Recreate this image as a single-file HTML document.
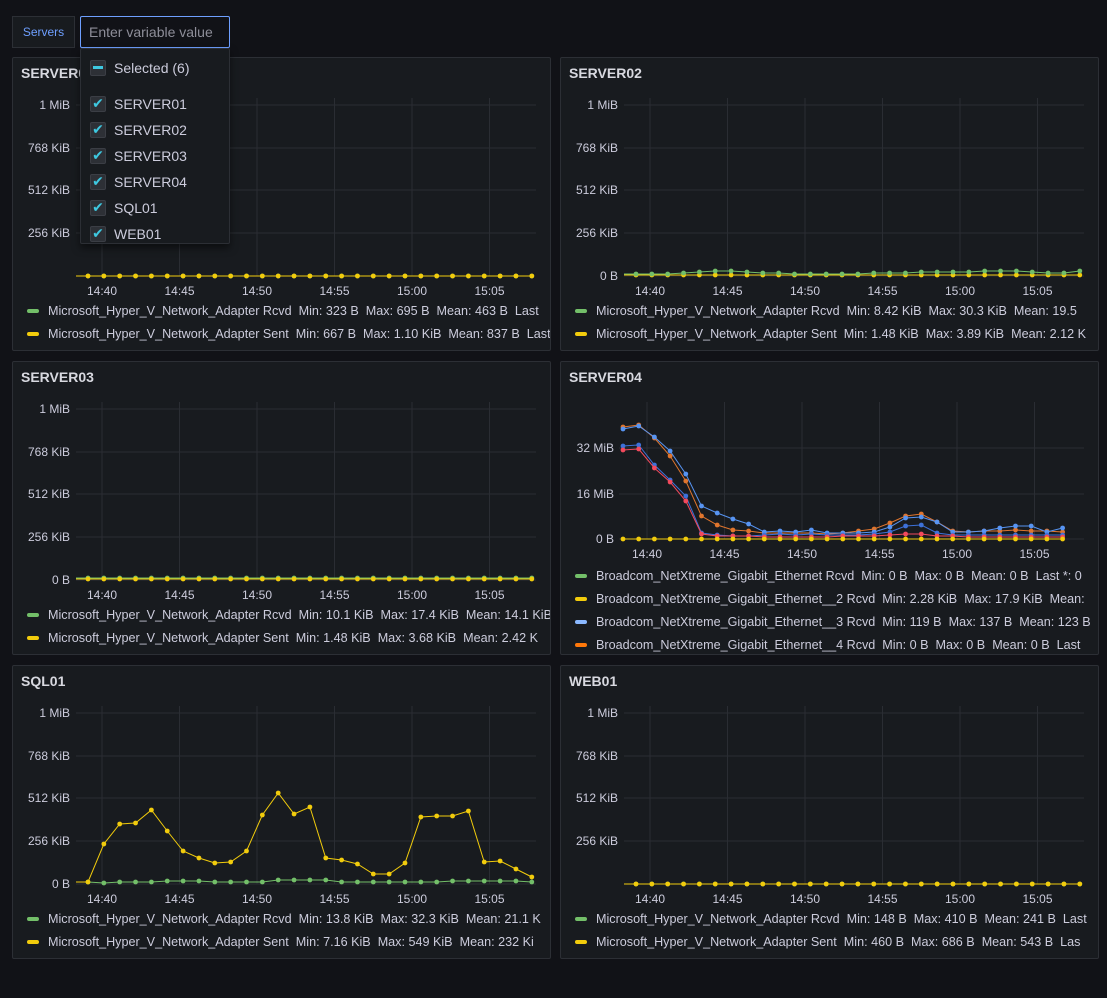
<!DOCTYPE html>
<html><head><meta charset="utf-8"><style>
body{margin:0;background:#111217;width:1107px;height:998px;overflow:hidden;font-family:"Liberation Sans",sans-serif;color:#ccccdc;position:relative}
.p{position:absolute;width:539px;height:294px;background:#181b1f;border:1px solid #2c2f35;box-sizing:border-box;border-radius:2px;overflow:hidden}
.t{position:absolute;left:8px;top:7px;font-size:14px;font-weight:bold;color:#d8d9e0}
svg{position:absolute;left:0;top:0}
.btn{position:absolute;left:12px;top:16px;width:63px;height:32px;box-sizing:border-box;border:1px solid #2c2f35;background:#181b1f;color:#6e9fff;font-size:12px;line-height:30px;text-align:center}
.inp{position:absolute;left:80px;top:16px;width:150px;height:32px;box-sizing:border-box;border:1px solid #6e9fff;border-radius:2px;background:#111217;color:#8e8e99;font-size:14px;line-height:30px;padding-left:8px}
.dd{position:absolute;left:80px;top:48px;width:150px;height:196px;box-sizing:border-box;border:1px solid #2c2f35;background:#181b1f;border-radius:2px;box-shadow:0 4px 8px rgba(0,0,0,.5)}
.it{position:absolute;left:9px;font-size:14px;color:#ccccdc;height:18px;line-height:18px}
.cb{display:inline-block;width:14px;height:14px;background:#2d3036;border:1px solid #3b3e45;border-radius:2px;vertical-align:top;margin-top:1px;margin-right:8px;position:relative;color:#3ec8e0;font-size:14px;line-height:14px;text-align:center;font-family:"DejaVu Sans",sans-serif}
</style></head><body>
<div class="btn">Servers</div>
<div id="root"></div>
<div class="inp">Enter variable value</div>
<div class="dd">
<div class="it" style="top:10px"><span class="cb"><span style="position:absolute;left:2px;top:5px;width:10px;height:3px;background:#3ec8e0"></span></span>Selected (6)</div>
<div class="it" style="top:46px"><span class="cb">✔</span>SERVER01</div>
<div class="it" style="top:72px"><span class="cb">✔</span>SERVER02</div>
<div class="it" style="top:98px"><span class="cb">✔</span>SERVER03</div>
<div class="it" style="top:124px"><span class="cb">✔</span>SERVER04</div>
<div class="it" style="top:150px"><span class="cb">✔</span>SQL01</div>
<div class="it" style="top:176px"><span class="cb">✔</span>WEB01</div>
</div>
<script>
const G='#73bf69',Y='#f2cc0c',B='#8ab8ff',O='#ff780a';
function flat(v,n){return Array(n||29).fill(v)}
const panels=[
{x:12,y:57,t:'SERVER01',s:[[G,flat(218)],[Y,flat(218)]],L:[[G,'Microsoft_Hyper_V_Network_Adapter Rcvd  Min: 323 B  Max: 695 B  Mean: 463 B  Last'],[Y,'Microsoft_Hyper_V_Network_Adapter Sent  Min: 667 B  Max: 1.10 KiB  Mean: 837 B  Last']]},
{x:560,y:57,t:'SERVER02',s:[[Y,flat(217)],[G,[216,216,216,215,214,213,213,214,215,215,216,216,216,216,216,215,215,215,214,214,214,214,213,213,213,214,215,215,213]]],L:[[G,'Microsoft_Hyper_V_Network_Adapter Rcvd  Min: 8.42 KiB  Max: 30.3 KiB  Mean: 19.5'],[Y,'Microsoft_Hyper_V_Network_Adapter Sent  Min: 1.48 KiB  Max: 3.89 KiB  Mean: 2.12 K']]},
{x:12,y:361,t:'SERVER03',s:[[G,flat(216)],[Y,flat(217)]],L:[[G,'Microsoft_Hyper_V_Network_Adapter Rcvd  Min: 10.1 KiB  Max: 17.4 KiB  Mean: 14.1 KiB'],[Y,'Microsoft_Hyper_V_Network_Adapter Sent  Min: 1.48 KiB  Max: 3.68 KiB  Mean: 2.42 K']]},
{x:560,y:361,t:'SERVER04',big:1},
{x:12,y:665,t:'SQL01',s:[[G,[216,217,216,216,216,215,215,215,216,216,216,216,214,214,214,214,216,216,216,216,216,216,216,215,215,215,215,215,216]],[Y,[216,178,158,157,144,165,185,192,197,196,185,149,127,148,141,192,194,198,208,208,197,151,150,150,145,196,195,203,211]]],L:[[G,'Microsoft_Hyper_V_Network_Adapter Rcvd  Min: 13.8 KiB  Max: 32.3 KiB  Mean: 21.1 K'],[Y,'Microsoft_Hyper_V_Network_Adapter Sent  Min: 7.16 KiB  Max: 549 KiB  Mean: 232 Ki']]},
{x:560,y:665,t:'WEB01',s:[[G,flat(218)],[Y,flat(218)]],noZero:1,noLine:1,L:[[G,'Microsoft_Hyper_V_Network_Adapter Rcvd  Min: 148 B  Max: 410 B  Mean: 241 B  Last'],[Y,'Microsoft_Hyper_V_Network_Adapter Sent  Min: 460 B  Max: 686 B  Mean: 543 B  Las']]}
];
panels[0].noZero=1;panels[0].noLine=1;
const xl=['14:40','14:45','14:50','14:55','15:00','15:05'];
let h='';
for(const p of panels){
 let s=`<svg width="539" height="294" font-family="Liberation Sans" font-size="12" fill="#ccccdc">`;
 if(!p.big){
  const ys=[[47,'1 MiB'],[90,'768 KiB'],[132,'512 KiB'],[175,'256 KiB'],[218,'0 B']];
  for(const [y,l] of ys){ if(!(p.noZero&&l=='0 B')) s+=`<text x="57" y="${y+4}" text-anchor="end">${l}</text>`; if(!(p.noLine&&l=='0 B')) s+=`<line x1="63" x2="523" y1="${y}" y2="${y}" stroke="#2a2d33"/>`;}
  xl.forEach((l,i)=>{const x=89+77.5*i;s+=`<line x1="${x}" x2="${x}" y1="40" y2="218" stroke="#2a2d33"/><text x="${x}" y="237" text-anchor="middle">${l}</text>`});
  for(const [c,d] of p.s){const pts=d.map((v,i)=>[75+i*15.85,v]);s+=`<polyline fill="none" stroke="${c}" stroke-width="1" points="63,${d[0]} ${pts.map(a=>a.join(',')).join(' ')}"/>`;pts.forEach(a=>{s+=`<circle cx="${a[0]}" cy="${a[1]}" r="2.4" fill="${c}"/>`});}
  p.L.forEach((l,i)=>{const y=253+i*23;s+=`<rect x="14" y="${y-2}" width="12" height="4" rx="2" fill="${l[0]}"/><text x="35" y="${y+4}" font-size="12.6" xml:space="preserve">${l[1]}</text>`});
 } else {
  const ys=[[86,'32 MiB'],[132,'16 MiB'],[177,'0 B']];
  for(const [y,l] of ys){s+=`<text x="53" y="${y+4}" text-anchor="end">${l}</text><line x1="58" x2="523" y1="${y}" y2="${y}" stroke="#2a2d33"/>`;}
  xl.forEach((l,i)=>{const x=86+77.5*i;s+=`<line x1="${x}" x2="${x}" y1="40" y2="177" stroke="#2a2d33"/><text x="${x}" y="196" text-anchor="middle">${l}</text>`});
  const ser=[
   ['#e0752d',[426,424,437,455,480,515,524,529,530,532,532,532,532,533,532,530,528,522,515,513,521,530,531,530,530,529,530,530,531]],
   ['#5794f2',[428,425,436,450,473,505,512,518,523,531,530,531,529,532,532,532,531,526,517,516,521,531,531,530,527,525,525,531,527]],
   ['#3d71d9',[445,444,464,479,495,532,534,535,535,534,533,534,533,534,534,534,533,531,525,524,532,534,534,534,534,534,534,534,534]],
   ['#f2495c',[449,448,467,481,500,533,535,535,535,536,536,536,536,536,535,535,535,534,533,533,535,535,536,536,536,536,536,536,536]],
   [Y,flat(538)]];
  for(const [c,d] of ser){const pts=d.map((v,i)=>[62+i*15.7,v-361]);s+=`<polyline fill="none" stroke="${c}" stroke-width="1" points="${pts.map(a=>a.join(',')).join(' ')}"/>`;pts.forEach(a=>{s+=`<circle cx="${a[0]}" cy="${a[1]}" r="2.4" fill="${c}"/>`});}
  const L=[[G,'Broadcom_NetXtreme_Gigabit_Ethernet Rcvd  Min: 0 B  Max: 0 B  Mean: 0 B  Last *: 0'],[Y,'Broadcom_NetXtreme_Gigabit_Ethernet__2 Rcvd  Min: 2.28 KiB  Max: 17.9 KiB  Mean:'],[B,'Broadcom_NetXtreme_Gigabit_Ethernet__3 Rcvd  Min: 119 B  Max: 137 B  Mean: 123 B'],[O,'Broadcom_NetXtreme_Gigabit_Ethernet__4 Rcvd  Min: 0 B  Max: 0 B  Mean: 0 B  Last']];
  L.forEach((l,i)=>{const y=214+i*23;s+=`<rect x="14" y="${y-2}" width="12" height="4" rx="2" fill="${l[0]}"/><text x="35" y="${y+4}" font-size="12.6" xml:space="preserve">${l[1]}</text>`});
 }
 s+='</svg>';
 h+=`<div class="p" style="left:${p.x}px;top:${p.y}px">${s}<div class="t">${p.t}</div></div>`;
}
document.getElementById('root').innerHTML=h;
</script>
</body></html>
